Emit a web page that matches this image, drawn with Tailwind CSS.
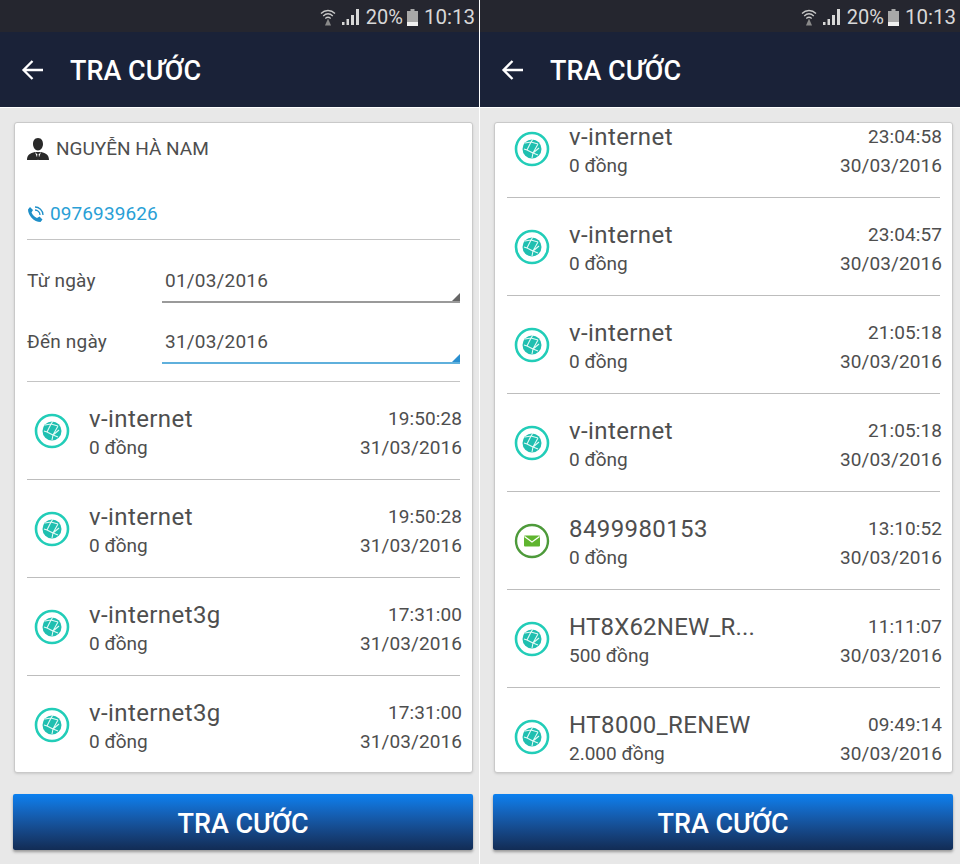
<!DOCTYPE html>
<html lang="en">

<head>
    <meta charset="UTF-8" />
    <title>Tra cước</title>
    <script src="https://cdn.jsdelivr.net/npm/@tailwindcss/browser@4"></script>
</head>

<body class="bg-white font-['Roboto',sans-serif] text-[#4e4e4e]">
    <!-- Shared icons -->
    <svg class="hidden">
        <symbol id="globe" viewBox="0 0 36 36">
            <circle cx="18" cy="18" r="16" fill="none" stroke="#22cdb8" stroke-width="2.6" />
            <circle cx="18" cy="18" r="9.5" fill="#1fbfb0" />
            <path d="M11 12l6-1 7 2M17 11l-4 8 6 3 6-5M13 19l-3-1M19 22l-1 5M19 22l5 2M17 11l2-3M24 13l-5 9" fill="none" stroke="#e4faf6" stroke-width="1.100" />
        </symbol>
        <symbol id="mail" viewBox="0 0 36 36">
            <circle cx="18" cy="18" r="16" fill="none" stroke="#4d9a3a" stroke-width="2.400" />
            <rect x="10" y="12.500" width="16" height="11" rx="1" fill="#5fb52f" />
            <path d="M10.500 13.500L18 19l7.500-5.500" fill="none" stroke="#fff" stroke-width="1.300" />
        </symbol>
        <symbol id="back" viewBox="0 0 24 24">
            <path d="M22 12H3M11.500 3L2.500 12l9 9" fill="none" stroke="#fff" stroke-width="2.300" />
        </symbol>
        <symbol id="status-wifi" viewBox="0 0 16 18">
            <path d="M1 5.500c4-4 10-4 14 0M3.200 8c3-2.800 6.600-2.800 9.600 0M5.300 10.400c1.800-1.500 3.600-1.500 5.400 0" fill="none" stroke="#c8c8c8" stroke-width="1.300" />
            <path d="M8 10.500l3 7H5z" fill="#8a8a8a" />
        </symbol>
        <symbol id="status-signal" viewBox="0 0 17 16">
            <path d="M0 13h2.500v3H0zM4.500 10H7v6H4.500zM9 6h3v10H9zM14 0h3v16h-3z" fill="#d8d8d8" />
        </symbol>
        <symbol id="status-battery" viewBox="0 0 11 17">
            <path d="M3.500 0h4v2H11v15H0V2h3.500z" fill="#a8a8a8" />
            <rect y="13" width="11" height="4" fill="#f0f0f0" />
        </symbol>
    </svg>

    <div class="flex w-[960px] h-[864px] overflow-hidden">
        <!-- Left screen -->
        <div class="w-[479px] mr-px flex flex-col bg-[#e8e8e8]">
            <div class="h-[32px] pt-[2px] bg-[#25262f] flex items-center justify-end gap-[4px] pr-[4px] text-[#d8d8d8]">
                <svg class="w-[16px] h-[18px]"><use href="#status-wifi" /></svg>
                <svg class="w-[17px] h-[16px] ml-[2px]"><use href="#status-signal" /></svg>
                <span class="text-[20px] ml-[3px]">20%</span>
                <svg class="w-[11px] h-[17px]"><use href="#status-battery" /></svg>
                <span class="text-[20.500px] ml-[2px]">10:13</span>
            </div>
            <div class="h-[75px] bg-[#1a2238] flex items-center pl-[21px]">
                <svg class="w-[24px] h-[24px]"><use href="#back" /></svg>
                <h1 class="ml-[25px] pt-[4px] text-white text-[27px] font-medium">TRA CƯỚC</h1>
            </div>
            <div class="h-px bg-white"></div>

            <main class="flex-1 flex flex-col pt-[14px]">
                <div class="ml-[14px] w-[459px] h-[651px] bg-white border border-[#c9c9c9] rounded-[3px] overflow-hidden pl-[12px] pr-[12px] shadow-sm">
                    <!-- Subscriber -->
                    <div class="h-[117px] border-b border-[#c4c4c4]">
                        <div class="flex items-center gap-[7px] h-[52px]">
                            <svg class="w-[22px] h-[22px]" viewBox="0 0 22 22">
                                <path d="M11 0c3.500 0 5 3 5 6 0 3-2 6.500-5 6.500S6 9 6 6c0-3 1.500-6 5-6zM0 22c0-5 3-7 8-8h6c5 1 8 3 8 8z" fill="#2a2a2a" />
                                <path d="M8 14l3 3 3-3-3 8z" fill="#fff" />
                                <path d="M10.300 16.500h1.400l.5 5h-2.400z" fill="#2a2a2a" />
                            </svg>
                            <span class="text-[19px]">NGUYỄN HÀ NAM</span>
                        </div>
                        <div class="flex items-center gap-[6px] mt-[25px] text-[#2a9fd6] text-[19px] tracking-[.1px]">
                            <svg class="w-[17px] h-[17px]" viewBox="0 0 17 17"><path d="M3 1l3 3-1.500 2.500c1 2.500 3 4.500 5.500 5.500L12.500 10.500l3 3-2 2.500C7 16 1 9.500 1 3.500z" fill="#1f8fc8" /><path d="M8 1c4 0 8 3.500 8 8M8 4c2.500 0 5 2 5 5" fill="none" stroke="#1f8fc8" stroke-width="1.300" /></svg>
                            <span>0976939626</span>
                        </div>
                    </div>

                    <!-- Date range -->
                    <div class="h-[142px] border-b border-[#c4c4c4] pt-[22px]">
                        <div class="flex h-[41px]">
                            <label class="w-[135px] text-[19px] tracking-[.2px] pt-[5px]">Từ ngày</label>
                            <div class="relative flex-1 border-b-2 border-[#9a9a9a] pl-[3px] text-[19px] tracking-[.2px] pt-[5px]">
                                01/03/2016
                                <span class="absolute right-0 bottom-0 border-[4px] border-transparent border-r-[#666] border-b-[#666]"></span>
                            </div>
                        </div>
                        <div class="flex h-[41px] mt-[20px]">
                            <label class="w-[135px] text-[19px] tracking-[.2px] pt-[5px]">Đến ngày</label>
                            <div class="relative flex-1 border-b-2 border-[#5fb0dc] pl-[3px] text-[19px] tracking-[.2px] pt-[5px]">
                                31/03/2016
                                <span class="absolute right-0 bottom-0 border-[4px] border-transparent border-r-[#2a8fd0] border-b-[#2a8fd0]"></span>
                            </div>
                        </div>
                    </div>

                    <!-- Usage list -->
                    <div class="h-[98px] border-b border-[#bdbdbd] flex pt-[23px] pl-[7px]">
                        <svg class="w-[36px] h-[36px] mt-[8px]"><use href="#globe" /></svg>
                        <div class="ml-[19px] flex-1"><p class="text-[24px] leading-[28px] tracking-[.4px]">v-internet</p><p class="text-[19px] leading-[30px]">0 đồng</p></div>
                        <div class="mr-[-2px] -mt-px text-right text-[19px] tracking-[.1px] leading-[29px]"><p>19:50:28</p><p>31/03/2016</p></div>
                    </div>
                    <div class="h-[98px] border-b border-[#bdbdbd] flex pt-[23px] pl-[7px]">
                        <svg class="w-[36px] h-[36px] mt-[8px]"><use href="#globe" /></svg>
                        <div class="ml-[19px] flex-1"><p class="text-[24px] leading-[28px] tracking-[.4px]">v-internet</p><p class="text-[19px] leading-[30px]">0 đồng</p></div>
                        <div class="mr-[-2px] -mt-px text-right text-[19px] tracking-[.1px] leading-[29px]"><p>19:50:28</p><p>31/03/2016</p></div>
                    </div>
                    <div class="h-[98px] border-b border-[#bdbdbd] flex pt-[23px] pl-[7px]">
                        <svg class="w-[36px] h-[36px] mt-[8px]"><use href="#globe" /></svg>
                        <div class="ml-[19px] flex-1"><p class="text-[24px] leading-[28px] tracking-[.4px]">v-internet3g</p><p class="text-[19px] leading-[30px]">0 đồng</p></div>
                        <div class="mr-[-2px] -mt-px text-right text-[19px] tracking-[.1px] leading-[29px]"><p>17:31:00</p><p>31/03/2016</p></div>
                    </div>
                    <div class="h-[98px] flex pt-[23px] pl-[7px]">
                        <svg class="w-[36px] h-[36px] mt-[8px]"><use href="#globe" /></svg>
                        <div class="ml-[19px] flex-1"><p class="text-[24px] leading-[28px] tracking-[.4px]">v-internet3g</p><p class="text-[19px] leading-[30px]">0 đồng</p></div>
                        <div class="mr-[-2px] -mt-px text-right text-[19px] tracking-[.1px] leading-[29px]"><p>17:31:00</p><p>31/03/2016</p></div>
                    </div>
                </div>

                <button class="ml-[13px] mt-[21px] w-[460px] h-[56px] pt-[5px] rounded-[2px] bg-gradient-to-b from-[#0a80f0] to-[#122c55] text-white text-[27px] font-medium shadow-[0_2px_3px_rgba(0,0,0,.35)]">TRA CƯỚC</button>
            </main>
        </div>

        <!-- Right screen -->
        <div class="w-[480px] flex flex-col bg-[#e8e8e8]">
            <div class="h-[32px] pt-[2px] bg-[#25262f] flex items-center justify-end gap-[4px] pr-[4px] text-[#d8d8d8]">
                <svg class="w-[16px] h-[18px]"><use href="#status-wifi" /></svg>
                <svg class="w-[17px] h-[16px] ml-[2px]"><use href="#status-signal" /></svg>
                <span class="text-[20px] ml-[3px]">20%</span>
                <svg class="w-[11px] h-[17px]"><use href="#status-battery" /></svg>
                <span class="text-[20.500px] ml-[2px]">10:13</span>
            </div>
            <div class="h-[75px] bg-[#1a2238] flex items-center pl-[21px]">
                <svg class="w-[24px] h-[24px]"><use href="#back" /></svg>
                <h1 class="ml-[25px] pt-[4px] text-white text-[27px] font-medium">TRA CƯỚC</h1>
            </div>
            <div class="h-px bg-white"></div>

            <main class="flex-1 flex flex-col pt-[14px]">
                <div class="ml-[14px] w-[459px] h-[651px] bg-white border border-[#c9c9c9] rounded-[3px] overflow-hidden pl-[12px] pr-[12px] shadow-sm">
                    <!-- List scrolled past the header -->
                    <div class="-mt-[23px]">
                        <div class="h-[98px] border-b border-[#bdbdbd] flex pt-[23px] pl-[7px]">
                            <svg class="w-[36px] h-[36px] mt-[8px]"><use href="#globe" /></svg>
                            <div class="ml-[19px] flex-1"><p class="text-[24px] leading-[28px] tracking-[.4px]">v-internet</p><p class="text-[19px] leading-[30px]">0 đồng</p></div>
                            <div class="mr-[-2px] -mt-px text-right text-[19px] tracking-[.1px] leading-[29px]"><p>23:04:58</p><p>30/03/2016</p></div>
                        </div>
                        <div class="h-[98px] border-b border-[#bdbdbd] flex pt-[23px] pl-[7px]">
                            <svg class="w-[36px] h-[36px] mt-[8px]"><use href="#globe" /></svg>
                            <div class="ml-[19px] flex-1"><p class="text-[24px] leading-[28px] tracking-[.4px]">v-internet</p><p class="text-[19px] leading-[30px]">0 đồng</p></div>
                            <div class="mr-[-2px] -mt-px text-right text-[19px] tracking-[.1px] leading-[29px]"><p>23:04:57</p><p>30/03/2016</p></div>
                        </div>
                        <div class="h-[98px] border-b border-[#bdbdbd] flex pt-[23px] pl-[7px]">
                            <svg class="w-[36px] h-[36px] mt-[8px]"><use href="#globe" /></svg>
                            <div class="ml-[19px] flex-1"><p class="text-[24px] leading-[28px] tracking-[.4px]">v-internet</p><p class="text-[19px] leading-[30px]">0 đồng</p></div>
                            <div class="mr-[-2px] -mt-px text-right text-[19px] tracking-[.1px] leading-[29px]"><p>21:05:18</p><p>30/03/2016</p></div>
                        </div>
                        <div class="h-[98px] border-b border-[#bdbdbd] flex pt-[23px] pl-[7px]">
                            <svg class="w-[36px] h-[36px] mt-[8px]"><use href="#globe" /></svg>
                            <div class="ml-[19px] flex-1"><p class="text-[24px] leading-[28px] tracking-[.4px]">v-internet</p><p class="text-[19px] leading-[30px]">0 đồng</p></div>
                            <div class="mr-[-2px] -mt-px text-right text-[19px] tracking-[.1px] leading-[29px]"><p>21:05:18</p><p>30/03/2016</p></div>
                        </div>
                        <div class="h-[98px] border-b border-[#bdbdbd] flex pt-[23px] pl-[7px]">
                            <svg class="w-[36px] h-[36px] mt-[8px]"><use href="#mail" /></svg>
                            <div class="ml-[19px] flex-1"><p class="text-[24px] leading-[28px] tracking-[.4px]">8499980153</p><p class="text-[19px] leading-[30px]">0 đồng</p></div>
                            <div class="mr-[-2px] -mt-px text-right text-[19px] tracking-[.1px] leading-[29px]"><p>13:10:52</p><p>30/03/2016</p></div>
                        </div>
                        <div class="h-[98px] border-b border-[#bdbdbd] flex pt-[23px] pl-[7px]">
                            <svg class="w-[36px] h-[36px] mt-[8px]"><use href="#globe" /></svg>
                            <div class="ml-[19px] flex-1"><p class="text-[24px] leading-[28px] tracking-[.2px]">HT8X62NEW_R...</p><p class="text-[19px] leading-[30px]">500 đồng</p></div>
                            <div class="mr-[-2px] -mt-px text-right text-[19px] tracking-[.1px] leading-[29px]"><p>11:11:07</p><p>30/03/2016</p></div>
                        </div>
                        <div class="h-[98px] flex pt-[23px] pl-[7px]">
                            <svg class="w-[36px] h-[36px] mt-[8px]"><use href="#globe" /></svg>
                            <div class="ml-[19px] flex-1"><p class="text-[24px] leading-[28px] tracking-[.45px]">HT8000_RENEW</p><p class="text-[19px] leading-[30px]">2.000 đồng</p></div>
                            <div class="mr-[-2px] -mt-px text-right text-[19px] tracking-[.1px] leading-[29px]"><p>09:49:14</p><p>30/03/2016</p></div>
                        </div>
                    </div>
                </div>

                <button class="ml-[13px] mt-[21px] w-[460px] h-[56px] pt-[5px] rounded-[2px] bg-gradient-to-b from-[#0a80f0] to-[#122c55] text-white text-[27px] font-medium shadow-[0_2px_3px_rgba(0,0,0,.35)]">TRA CƯỚC</button>
            </main>
        </div>
    </div>
</body>

</html>
